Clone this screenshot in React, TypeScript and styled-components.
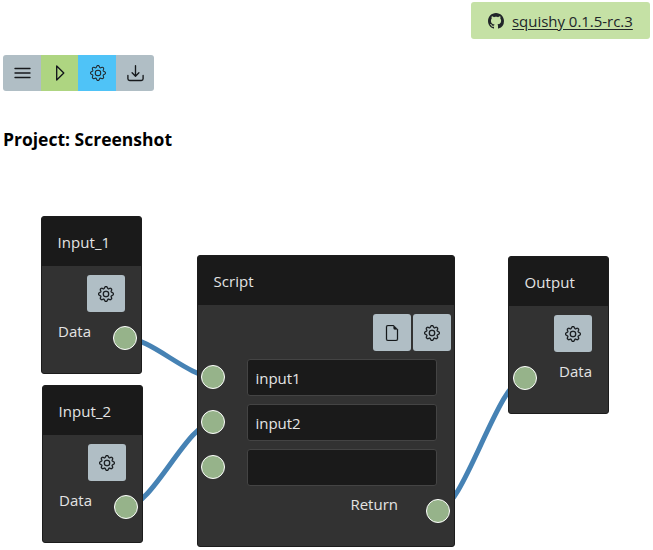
import React from "react";
import styled, { createGlobalStyle } from "styled-components";
import { BsFileEarmark, BsGear, BsGithub } from "react-icons/bs";

const GlobalStyle = createGlobalStyle`
  * { box-sizing: border-box; }
  body {
    margin: 0;
    background: #fff;
    color: #212529;
    font: 15px/22px "Open Sans", "Noto Sans", sans-serif;
    overflow: hidden;
  }
`;

const Page = styled.main`
  position: relative;
  height: 550px;
  padding: 2px 3px 0;
  display: flex;
  flex-direction: column;
  align-items: flex-start;
  overflow: hidden;
`;

const VersionBadge = styled.div`
  align-self: flex-end;
  width: 179px;
  height: 37px;
  padding-left: 17px;
  display: flex;
  align-items: center;
  gap: 8px;
  border-radius: 3px;
  background: #c5e1a5;
`;

const VersionLink = styled.a`
  color: #212529;
  font-size: 15px;
  letter-spacing: -0.03px;
  text-decoration: underline;
  text-underline-offset: 2px;
  white-space: nowrap;
`;

const Toolbar = styled.nav`
  display: flex;
  margin-top: 16px;
  border-radius: 3px;
  overflow: hidden;
`;

const ToolButton = styled.button<{ $color: string; $width?: number }>`
  width: ${(p) => p.$width ?? 38}px;
  height: 36px;
  padding: 0 0 0 1px;
  border: 0;
  display: flex;
  align-items: center;
  justify-content: center;
  background: ${(p) => p.$color};
  color: #212529;
`;

const ProjectTitle = styled.h3`
  margin: 36px 0 0;
  color: #000;
  font-size: 17.5px;
  line-height: 25px;
  font-weight: 700;
  white-space: nowrap;
`;

const Wires = styled.svg`
  position: absolute;
  inset: 0;
  fill: none;
  stroke: steelblue;
  stroke-width: 5px;
`;

const NodeCard = styled.section<{ $x: number; $y: number; $w: number; $h: number }>`
  position: absolute;
  left: ${(p) => p.$x}px;
  top: ${(p) => p.$y}px;
  width: ${(p) => p.$w}px;
  height: ${(p) => p.$h}px;
  border: 1px solid #1c1c1c;
  border-radius: 3px;
  background: #323232;
  color: #e4e4e4;
  overflow: hidden;
`;

const NodeHeader = styled.header`
  height: 49px;
  padding: 1px 0 0 15.5px;
  display: flex;
  align-items: center;
  background: #1a1a1a;
  letter-spacing: 0.06px;
`;

const Controls = styled.div<{ $right: number }>`
  display: flex;
  justify-content: flex-end;
  gap: 2px;
  padding: 9px ${(p) => p.$right}px 0 0;
`;

const NodeButton = styled.button`
  width: 38px;
  height: 37px;
  padding: 0;
  border: 0;
  border-radius: 3px;
  display: flex;
  align-items: center;
  justify-content: center;
  background: #b0bec5;
  color: #16191c;

  svg {
    stroke-width: 0.25px;
  }
`;

const PortRow = styled.div<{ $top: number; $input?: boolean; $right: number }>`
  display: flex;
  justify-content: ${(p) => (p.$input ? "space-between" : "flex-end")};
  align-items: flex-end;
  height: 24px;
  margin-top: ${(p) => p.$top}px;
  padding: 0 ${(p) => p.$right}px 0 4px;
`;

const PortLabel = styled.span<{ $gap?: number }>`
  height: 22px;
  margin: 0 ${(p) => p.$gap ?? 0}px 8px 0;
`;

const Socket = styled.span`
  flex: none;
  width: 24px;
  height: 24px;
  border: 1px solid #fff;
  border-radius: 50%;
  background: #96b38a;
`;

const FieldRow = styled.label`
  height: 37px;
  margin: 8px 0 0 3.4px;
  display: flex;
  align-items: flex-start;
  gap: 22px;

  ${Socket} {
    margin-top: 6px;
  }
`;

const Field = styled.input`
  width: 190px;
  height: 37px;
  padding: 0 7px;
  border: 1px solid #444;
  border-radius: 3px;
  background: #1a1a1a;
  color: #e4e4e4;
  font: inherit;
  outline: 0;
`;

const LineIcon = styled.svg`
  width: 18px;
  height: 18px;
  fill: none;
  stroke: #16191c;
  stroke-width: 1.35;
  stroke-linecap: round;
  stroke-linejoin: round;
`;

const MenuIcon = () => (
  <LineIcon viewBox="0 0 18 18">
    <path d="M1 4.5h15M1 9h15M1 13.5h15" />
  </LineIcon>
);

const PlayIcon = () => (
  <LineIcon viewBox="0 0 18 18">
    <path d="M5.7 2v14L12.8 9z" />
  </LineIcon>
);

const DownloadIcon = () => (
  <LineIcon viewBox="0 0 18 18">
    <path d="M.9 11.5v3.2q0 1.8 1.8 1.8h11.6q1.8 0 1.8-1.8v-3.2M8.5 1.7v10.4M5.1 8.8l3.4 3.4 3.4-3.4" />
  </LineIcon>
);

const SettingsButton = () => (
  <NodeButton aria-label="Settings">
    <BsGear size={16} />
  </NodeButton>
);

const InputNode = ({ name, x, y }: { name: string; x: number; y: number }) => (
  <NodeCard $x={x} $y={y} $w={101} $h={158}>
    <NodeHeader>{name}</NodeHeader>
    <Controls $right={16}>
      <SettingsButton />
    </Controls>
    <PortRow $top={14} $right={4}>
      <PortLabel $gap={22}>Data</PortLabel>
      <Socket />
    </PortRow>
  </NodeCard>
);

// Horizontal S-curve joining an output socket to an input socket.
const wirePath = (x1: number, y1: number, x2: number, y2: number) => {
  const bend = (x2 - x1) * 0.3;
  return `M${x1} ${y1}C${x1 + bend} ${y1} ${x2 - bend} ${y2} ${x2} ${y2}`;
};

export default function App() {
  return (
    <>
      <GlobalStyle />
      <Page>
        <VersionBadge>
          <BsGithub size={16} color="#212529" />
          <VersionLink>squishy 0.1.5-rc.3</VersionLink>
        </VersionBadge>
        <Toolbar>
          <ToolButton $color="#b0bec5" aria-label="Menu"><MenuIcon /></ToolButton>
          <ToolButton $color="#aed581" $width={37} aria-label="Run"><PlayIcon /></ToolButton>
          <ToolButton $color="#4fc3f7" aria-label="Settings"><BsGear size={16} /></ToolButton>
          <ToolButton $color="#b0bec5" aria-label="Download"><DownloadIcon /></ToolButton>
        </Toolbar>
        <ProjectTitle>Project: Screenshot</ProjectTitle>

        <Wires width="653" height="550">
          <path d={wirePath(125, 338, 214, 377)} />
          <path d={wirePath(126, 507, 214, 422)} />
          <path d={wirePath(437, 511, 525, 378)} />
        </Wires>
        <InputNode name="Input_1" x={41} y={216} />
        <InputNode name="Input_2" x={42} y={385} />
        <NodeCard $x={197} $y={255} $w={258} $h={292}>
          <NodeHeader>Script</NodeHeader>
          <Controls $right={3}>
            <NodeButton aria-label="File"><BsFileEarmark size={16} /></NodeButton>
            <SettingsButton />
          </Controls>
          {["input1", "input2", ""].map((value, i) => (
            <FieldRow key={i}>
              <Socket />
              <Field defaultValue={value} />
            </FieldRow>
          ))}
          <PortRow $top={13} $right={4}>
            <PortLabel $gap={28}>Return</PortLabel>
            <Socket />
          </PortRow>
        </NodeCard>
        <NodeCard $x={508} $y={256} $w={101} $h={158}>
          <NodeHeader>Output</NodeHeader>
          <Controls $right={16}>
            <SettingsButton />
          </Controls>
          <PortRow $input $top={14} $right={16}>
            <Socket />
            <PortLabel>Data</PortLabel>
          </PortRow>
        </NodeCard>
      </Page>
    </>
  );
}
